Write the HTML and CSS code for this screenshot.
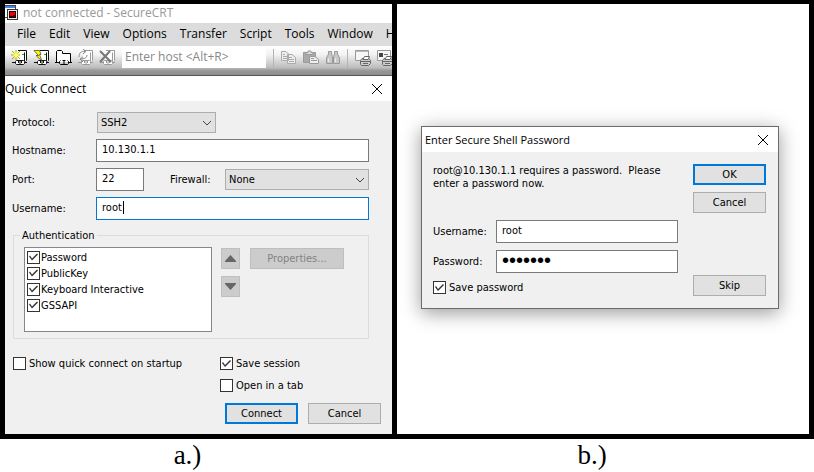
FILE: index.html
```html
<!DOCTYPE html>
<html lang="en">
<head>
<meta charset="utf-8">
<title>SecureCRT connection dialogs</title>
<link rel="stylesheet" href="styles.css">
</head>
<body>
<main class="frame">
  <section class="pane">
    <header class="app-title">
      <svg class="app-icon" width="14" height="16" viewBox="0 0 14 16" shape-rendering="crispEdges" aria-hidden="true">
        <path d="M0 1h11v12H0z" fill="#fff"/><path d="M0 1h10v2H0z" fill="#4a86e8"/><path d="M0 0h11v1H0zM10 1h1v3h-1zM0 12h3v1H0z" fill="#444"/>
        <path d="M2 4h11v11H2z" fill="#333"/><path d="M3 5h9v9H3z" fill="#eee"/><path d="M4 6h7v7H4z" fill="#200"/><path d="M5 7h5v4H5z" fill="#e00"/><path d="M8 10h3v2H8z" fill="#400"/>
      </svg>
      <span>not connected - SecureCRT</span>
    </header>
    <nav class="menu" aria-label="Main menu">
      <button>File</button><button>Edit</button><button>View</button><button>Options</button><button>Transfer</button><button>Script</button><button>Tools</button><button>Window</button><button>Help</button>
    </nav>
    <svg class="defs" width="0" height="0" aria-hidden="true">
      <symbol id="host" viewBox="0 0 18 18">
        <path d="M6.500 2.500L8 1.500H15.500V11.500L14 13.500H6.500z" fill="#fff"/>
        <path d="M7 1.500H15.500V11.500L14.500 12.500M13.500 3.500V12" fill="none" stroke="currentColor"/>
        <path d="M1 13.500H4.500M13.500 13.500H16" stroke="currentColor"/>
        <path d="M5.500 11.500H12.500L13.500 12.500V14.500L12.500 15.500H5.500L4.500 14.500V12.500z" fill="#fff" stroke="currentColor"/>
        <path d="M7.500 11V14M10.500 11V14M9 12V16" stroke="currentColor"/>
      </symbol>
      <symbol id="printer" viewBox="0 0 17 17">
        <path d="M5.500 10.500L7 8.500H14L15.500 10.500V13.500L13.500 15.500H6.500L5.500 14.500z" fill="#ccc" stroke="#666"/>
        <path d="M8 9.500L9.500 6.500H14.500L13 9.500z" fill="#fff" stroke="#666"/>
        <path d="M6 11.500H15M8 13.500H13" stroke="#666"/>
      </symbol>
    </svg>
    <div class="toolbar">
      <button class="tool" aria-label="Connect"><svg width="18" height="18" viewBox="0 0 18 18"><use href="#host"/><path d="M1 2L9 10M5 1V11M0 6H9M9 2L1 10" stroke="#a8a800"/><path d="M5 3L8 6 5 9 2 6z" fill="#ff5"/><path d="M11 5h2v1h-2z" fill="#0c0"/></svg></button>
      <button class="tool" aria-label="Quick connect"><svg width="18" height="18" viewBox="0 0 18 18"><use href="#host"/><path d="M1 1.500H6.500L8 5.500H6.500L9 12 3 6.500H5.500z" fill="#ff0" stroke="#333" stroke-width=".7"/><path d="M11 5h2v1h-2z" fill="#0c0"/></svg></button>
      <button class="tool" aria-label="Connect in tab"><svg width="18" height="18" viewBox="0 0 18 18"><path d="M1.500 13V2.500L2.500 1.500H6.500L7.500 2.500V4.500H15.500V13" fill="#fff" stroke="#000"/><path d="M0 13.500H4.500M13.500 13.500H17M4.500 12.500L5.500 11.500M12.500 11.500L13.500 12.500V14.500L12.500 15.500H5.500L4.500 14.500V12.500M7.500 11.500H10.500M9 12V16" fill="none" stroke="#000"/></svg></button>
      <button class="tool faded" aria-label="Reconnect"><svg width="18" height="18" viewBox="0 0 18 18"><use href="#host"/><path d="M2 8C2 4 4 2 8 2.500M6 0L9 2.500 6 5M10 6C10 9 7 10 4 10M6 8L3 10 6 13" fill="none" stroke="#888"/></svg></button>
      <button class="tool faded" aria-label="Disconnect"><svg width="18" height="18" viewBox="0 0 18 18"><use href="#host"/><path d="M1 2L12 13M11 2L1 13" stroke="#777" stroke-width="2"/></svg></button>
      <input class="host" aria-label="Host" placeholder="Enter host &lt;Alt+R&gt;">
      <span class="sep"></span>
      <button class="tool edit" aria-label="Copy"><svg width="16" height="16" viewBox="0 0 16 16" fill="#eee" stroke="#aaa"><path d="M.5 1.500H5L7.500 4V10.500H.5zM6.500 4.500H11L14.500 7.500V13.500H6.500z"/><path d="M2 4.500H4M2 6.500H6M2 8.500H6M8 7.500H11M8 9.500H13M8 11.500H13"/></svg></button>
      <button class="tool edit" aria-label="Paste"><svg width="16" height="16" viewBox="0 0 16 16" stroke="#999"><path d="M.5 2.500H12.500V12.500H.5z" fill="#aaa"/><path d="M3 4.500V2.500H5V1H8V2.500H10V4.500z" fill="#ddd"/><path d="M6.500 6.500H12L15.500 9.500V13.500H6.500z" fill="#eee"/><path d="M8 8.500H11M8 10.500H14"/></svg></button>
      <button class="tool edit" aria-label="Find"><svg width="16" height="16" viewBox="0 0 16 16" fill="#c8c8c8" stroke="#999"><path d="M3.500 1.500H6.500V4L7.500 6.500V13.500H1.500V8L3.500 4zM9.500 1.500H12.500V4L14.500 8V13.500H8.500V6.500L9.500 4z"/><path d="M3.500 8.500V12M10.500 8.500V12" stroke="#eee"/></svg></button>
      <span class="sep"></span>
      <button class="tool print" aria-label="Print"><svg width="17" height="17" viewBox="0 0 17 17"><path d="M.5 .5H13.500V10.500H.5z" fill="#f6f6f6" stroke="#999"/><path d="M1 1.500H13" stroke="#bbb"/><use href="#printer"/></svg></button>
      <button class="tool print" aria-label="Print screen"><svg width="17" height="17" viewBox="0 0 17 17"><path d="M.5 .5H13.500V10.500H.5z" fill="#f6f6f6" stroke="#999"/><path d="M2 3h4v4H2z" fill="#444"/><path d="M7 4.500H11" stroke="#777"/><use href="#printer"/></svg></button>
    </div>
    <form class="quick">
      <div class="dialog-title">
        <h1>Quick Connect</h1>
        <button type="button" class="close" aria-label="Close"><svg width="12" height="12" viewBox="0 0 12 12"><path d="M1 1L11 11M11 1L1 11" stroke="#000"/></svg></button>
      </div>
      <div class="quick-body">
        <div class="fields">
          <label for="protocol">Protocol:</label>
          <div class="select protocol"><select id="protocol"><option>SSH2</option></select><svg width="10" height="6" viewBox="0 0 10 6"><path d="M1 1L5 5L9 1" fill="none" stroke="#444"/></svg></div>
          <label for="hostname">Hostname:</label>
          <input id="hostname" class="text" value="10.130.1.1">
          <label for="port">Port:</label>
          <div class="port-row">
            <input id="port" class="text port" value="22">
            <label for="firewall">Firewall:</label>
            <div class="select firewall"><select id="firewall"><option>None</option></select><svg width="10" height="6" viewBox="0 0 10 6"><path d="M1 1L5 5L9 1" fill="none" stroke="#444"/></svg></div>
          </div>
          <label for="user">Username:</label>
          <div class="active-field"><input id="user" class="text active" value="root"><span class="caret"></span></div>
        </div>
        <fieldset class="auth">
          <legend>Authentication</legend>
          <div class="auth-row">
            <div class="list">
              <label class="check"><input type="checkbox" checked>Password</label>
              <label class="check"><input type="checkbox" checked>PublicKey</label>
              <label class="check"><input type="checkbox" checked>Keyboard Interactive</label>
              <label class="check"><input type="checkbox" checked>GSSAPI</label>
            </div>
            <div class="order">
              <button type="button" class="off" disabled aria-label="Move up"><svg width="11" height="7" viewBox="0 0 11 7"><path d="M5.500 0L11 6V7H0V6z" fill="#666"/></svg></button>
              <button type="button" class="off" disabled aria-label="Move down"><svg width="11" height="7" viewBox="0 0 11 7"><path d="M5.500 7L11 1V0H0V1z" fill="#666"/></svg></button>
            </div>
            <button type="button" class="off props" disabled>Properties...</button>
          </div>
        </fieldset>
        <div class="options">
          <label class="check wide"><input type="checkbox">Show quick connect on startup</label>
          <label class="check wide"><input type="checkbox" checked>Save session</label>
          <label class="check wide second"><input type="checkbox">Open in a tab</label>
        </div>
        <div class="actions">
          <button type="button" class="btn primary">Connect</button>
          <button type="button" class="btn">Cancel</button>
        </div>
      </div>
    </form>
  </section>
  <section class="pane desk">
    <form class="password">
      <div class="dialog-title">
        <h1>Enter Secure Shell Password</h1>
        <button type="button" class="close" aria-label="Close"><svg width="12" height="12" viewBox="0 0 12 12"><path d="M1 1L11 11M11 1L1 11" stroke="#000"/></svg></button>
      </div>
      <div class="password-body">
        <div class="login">
          <p>root@10.130.1.1 requires a password.&nbsp; Please<br>enter a password now.</p>
          <div class="login-fields">
            <label for="login-user">Username:</label><input id="login-user" class="text" value="root">
            <label for="login-pass">Password:</label><input id="login-pass" class="text" type="password" value="seven77">
          </div>
          <label class="check wide"><input type="checkbox" checked>Save password</label>
        </div>
        <div class="side">
          <button type="button" class="btn primary">OK</button>
          <button type="button" class="btn">Cancel</button>
          <button type="button" class="btn skip">Skip</button>
        </div>
      </div>
    </form>
  </section>
</main>
<footer class="captions"><p>a.)</p><p>b.)</p></footer>
</body>
</html>
```
FILE: styles.css
```css
* { box-sizing: border-box; }
body {
  margin: 0;
  min-height: 100vh;
  display: grid;
  grid-template-rows: 1fr auto;
  background: #fff;
  color: #000;
  font: 11px/13px "DejaVu Sans Condensed", "DejaVu Sans", sans-serif;
}
button, input, select { font: inherit; color: inherit; margin: 0; border-radius: 0; }
button { padding: 0; border: 0; background: none; }
svg { display: block; }
.defs { position: absolute; }
.frame, .captions { display: grid; grid-template-columns: 387fr 412fr; column-gap: 5px; }
.frame { background: #000; padding: 4px 5px 5px; }
.captions { padding: 0 5px; height: 33px; font: 27px/32px "Liberation Serif", serif; text-align: center; }
.captions p { margin: 0; padding-right: 22px; }
.pane { background: #fff; min-width: 0; overflow: hidden; display: flex; flex-direction: column; }

.app-title { height: 19px; display: flex; align-items: center; gap: 4px; padding-bottom: 2px; color: #999; font: 12px/16px "Open Sans", sans-serif; }
.menu { height: 23px; display: flex; align-items: center; gap: 13px; padding-left: 12px; padding-bottom: 2px; background: #dcdcdc; font: 12px/16px "Open Sans", sans-serif; }
.menu button { flex: none; }
.toolbar { height: 30px; display: flex; align-items: flex-start; padding: 3px 0 0 6px; background: linear-gradient(#fff, #f2f2f2 30%, #bcbcbc 75%, #989898 85%, #8c8c8c); border-bottom: 1px solid #555; }
.tool { flex: none; width: 22px; height: 18px; color: #111; }
.faded { color: #999; }
.host { flex: none; width: 144px; height: 22px; margin: -3px 7px 0 1px; padding: 0 3px 2px; border: 0; background: #fff; font: 12px/16px "Open Sans", sans-serif; }
.host::placeholder { color: #888; opacity: 1; }
.sep { flex: none; width: 1px; height: 19px; background: #b4b4b4; }
.sep + .tool { margin-left: 7px; }

.quick { flex: 1; display: flex; flex-direction: column; }
.dialog-title { height: 25px; display: flex; align-items: center; justify-content: space-between; background: #fff; }
.dialog-title h1 { margin: 0; font: 12px/16px "Open Sans", sans-serif; }
.close { width: 12px; height: 12px; margin-right: 9px; }
.quick-body { flex: 1; background: #f0f0f0; padding: 11px 11px 10px 7px; }
.fields { display: grid; grid-template-columns: 84px 1fr; row-gap: 6px; margin-right: 12px; align-items: center; }
.text { width: 100%; height: 23px; padding: 0 5px 2px; border: 1px solid #7a7a7a; background: #fff; outline: 0; }
.text[type="password"] { font: 20px/20px "Liberation Sans", sans-serif; }
.active { border-color: #0078d7; }
.active-field { position: relative; }
.caret { position: absolute; left: 27px; top: 4px; width: 1px; height: 13px; background: #000; }
.select { position: relative; height: 21px; }
.select select { width: 100%; height: 21px; appearance: none; padding: 0 3px; border: 1px solid #adadad; background: #e1e1e1; }
.select svg { position: absolute; right: 4px; top: 8px; pointer-events: none; }
.protocol { width: 119px; margin-left: 1px; }
.port-row { display: flex; align-items: center; }
.port { width: 48px; margin-right: 26px; }
.firewall { flex: 1; max-width: 144px; margin-left: auto; }

.auth { margin: 9px 12px 0 1px; padding: 0 8px 6px 10px; border: 1px solid #dcdcdc; }
.auth legend { margin-left: -4px; padding: 0 2px; }
.auth-row { display: flex; align-items: flex-start; padding-top: 5px; }
.list { width: 188px; height: 85px; padding: 1px 2px; border: 1px solid #828790; background: #fff; }
.check { display: flex; align-items: center; gap: 1px; height: 16px; }
.wide { height: 13px; gap: 3px; }
.check input { appearance: none; flex: none; width: 13px; height: 13px; border: 1px solid #333; background: #fff; }
.check input:checked::after { content: ""; display: block; width: 11px; height: 11px; background: #333; clip-path: polygon(1px 5px, 2px 4px, 4px 7px, 9px 2px, 10px 3px, 4px 9px); }
.order { display: grid; gap: 7px; margin: 1px 10px 0 9px; }
.off { height: 21px; border: 1px solid #bfbfbf; background: #ccc; color: #838383; }
.order .off { width: 19px; display: grid; place-items: center; }
.props { width: 94px; margin-top: 1px; }
.options { display: grid; grid-template-columns: 207px 1fr; row-gap: 9px; padding: 18px 0 0 1px; }
.second { grid-column: 2; }
.actions { display: flex; justify-content: flex-end; gap: 10px; margin-top: 11px; }
.btn { width: 73px; height: 21px; border: 1px solid #adadad; background: #e1e1e1; }
.primary { border: 2px solid #0078d7; }

.desk { padding: 122px 30px 0 24px; }
.password { border: 1px solid #6b6b6b; background: #f0f0f0; box-shadow: 0 4px 18px rgba(0, 0, 0, .4); }
.password .dialog-title { padding-left: 3px; }
.password h1 { font-size: 11px; }
.password-body { display: flex; gap: 15px; padding: 12px 12px 12px 11px; }
.login { flex: 1; padding-bottom: 2px; }
.login p { margin: 0 0 30px; }
.login-fields { display: grid; grid-template-columns: 63px 1fr; row-gap: 7px; align-items: center; margin-bottom: 8px; }
.side { display: flex; flex-direction: column; gap: 7px; }
.skip { margin-top: auto; }
```
